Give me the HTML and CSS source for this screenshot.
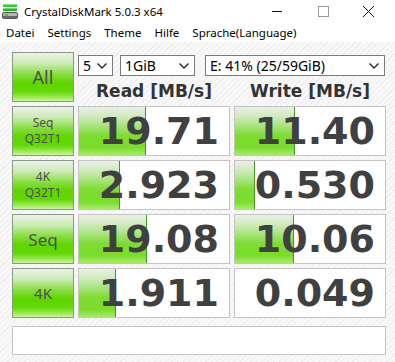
FILE: index.html
```html
<!DOCTYPE html>
<html lang="de">
<head>
    <meta charset="UTF-8">
    <title>CrystalDiskMark 5.0.3 x64</title>
    <link rel="stylesheet" href="styles.css">
</head>
<body>
    <div class="window">
        <div class="titlebar">
            <svg class="app-icon" width="16" height="16" viewBox="0 0 16 16">
                <rect x="1" y="1" width="14" height="3" fill="#3cc43c"/>
                <rect x="1" y="1" width="14" height="1" fill="#7ee07e"/>
                <rect x="1" y="5" width="14" height="3" fill="#2fb02f"/>
                <rect x="1" y="5" width="14" height="1" fill="#6fd86f"/>
                <rect x="0.5" y="9.5" width="15" height="6" rx="1.5" fill="#b8b8b8" stroke="#555"/>
                <rect x="1" y="13" width="14" height="2" fill="#6a6a6a"/>
                <rect x="3" y="11" width="3" height="2" fill="#35d035"/>
            </svg>
            <span class="title">CrystalDiskMark 5.0.3 x64</span>
            <div class="controls">
                <svg width="46" height="22" viewBox="0 0 46 22"><path d="M18 11.5h10" stroke="#111" stroke-width="1"/></svg>
                <svg width="46" height="22" viewBox="0 0 46 22"><rect x="18.5" y="6.5" width="10" height="10" fill="none" stroke="#999"/></svg>
                <svg width="46" height="22" viewBox="0 0 46 22"><path d="M17 6l11 11M28 6l-11 11" stroke="#111" stroke-width="1"/></svg>
            </div>
        </div>
        <div class="menubar">
            <span>Datei</span>
            <span>Settings</span>
            <span>Theme</span>
            <span>Hilfe</span>
            <span>Sprache(Language)</span>
        </div>

        <div class="main">
            <div class="top">
                <div class="btn btn-all">All</div>
                <div class="top-right">
                    <div class="selects">
                        <div class="select sel-count">5
                            <svg class="chev" width="10" height="6" viewBox="0 0 10 6"><path d="M0.5 0.5l4.5 4.5 4.5-4.5" fill="none" stroke="#222" stroke-width="1.3"/></svg>
                        </div>
                        <div class="select sel-size">1GiB
                            <svg class="chev" width="10" height="6" viewBox="0 0 10 6"><path d="M0.5 0.5l4.5 4.5 4.5-4.5" fill="none" stroke="#222" stroke-width="1.3"/></svg>
                        </div>
                        <div class="select sel-drive">E: 41% (25/59GiB)
                            <svg class="chev" width="10" height="6" viewBox="0 0 10 6"><path d="M0.5 0.5l4.5 4.5 4.5-4.5" fill="none" stroke="#222" stroke-width="1.3"/></svg>
                        </div>
                    </div>
                    <div class="headers">
                        <div class="head">Read [MB/s]</div>
                        <div class="head">Write [MB/s]</div>
                    </div>
                </div>
            </div>

            <div class="row">
                <div class="btn btn-small"><span>Seq</span><span>Q32T1</span></div>
                <div class="value"><div class="fill" style="width: 67px"></div><span>19.71</span></div>
                <div class="value"><div class="fill" style="width: 60px"></div><span>11.40</span></div>
            </div>
            <div class="row">
                <div class="btn btn-small"><span>4K</span><span>Q32T1</span></div>
                <div class="value"><div class="fill" style="width: 41px"></div><span>2.923</span></div>
                <div class="value"><div class="fill" style="width: 20px"></div><span>0.530</span></div>
            </div>
            <div class="row">
                <div class="btn btn-seq">Seq</div>
                <div class="value"><div class="fill" style="width: 68px"></div><span>19.08</span></div>
                <div class="value"><div class="fill" style="width: 59px"></div><span>10.06</span></div>
            </div>
            <div class="row">
                <div class="btn btn-4k">4K</div>
                <div class="value"><div class="fill" style="width: 37px"></div><span>1.911</span></div>
                <div class="value"><span>0.049</span></div>
            </div>

            <div class="status"></div>
        </div>
    </div>
</body>
</html>
```

FILE: styles.css
```css
body {
    margin: 0;
    font-family: "Noto Sans", sans-serif;
    background: #fff;
}
.window {
    width: 395px;
    height: 362px;
    overflow: hidden;
}
.titlebar {
    height: 22px;
    display: flex;
    align-items: center;
    background: #fff;
}
.app-icon {
    margin: 0 6px 0 2px;
}
.title {
    font-size: 11.5px;
    color: #000;
}
.controls {
    margin-left: auto;
    display: flex;
    align-self: flex-start;
    margin-right: 3px;
}
.controls svg {
    display: block;
}
.menubar {
    height: 20px;
    display: flex;
    align-items: center;
    gap: 13px;
    padding-left: 6px;
    font-size: 11.5px;
    color: #000;
    background: #fff;
}
.main {
    height: 320px;
    padding: 10px 9px 0 12px;
    display: flex;
    flex-direction: column;
    gap: 4px;
    background: repeating-linear-gradient(135deg, #f8f8f8 0 3px, #eeeeee 3px 4px);
}
.top {
    display: flex;
    gap: 4px;
    height: 50px;
}
.btn {
    width: 62px;
    box-sizing: border-box;
    border: 1px solid #889a86;
    background: linear-gradient(#eef1ec 0%, #c9ebb0 22%, #86dd3e 45%, #5fd600 62%, #62d804 80%, #a4ec62 94%, #cdf5a4 100%);
    color: #4f4f4f;
    display: flex;
    flex-direction: column;
    align-items: center;
    justify-content: center;
    text-align: center;
    flex-shrink: 0;
}
.btn-all {
    height: 50px;
    font-size: 18px;
}
.btn-small {
    font-size: 12px;
    line-height: 16px;
}
.btn-seq {
    font-size: 17px;
}
.btn-4k {
    font-size: 15px;
}
.top-right {
    display: flex;
    flex-direction: column;
}
.selects {
    display: flex;
    margin-top: 3px;
    height: 21px;
}
.select {
    box-sizing: border-box;
    height: 21px;
    border: 1px solid #7a7a7a;
    background: #fff;
    font-size: 14px;
    color: #000;
    display: flex;
    align-items: center;
    padding: 0 5px 0 4px;
}
.chev {
    margin-left: auto;
}
.sel-count {
    width: 35px;
}
.sel-size {
    width: 75px;
    margin-left: 7px;
}
.sel-drive {
    width: 180px;
    margin-left: 10px;
}
.headers {
    display: flex;
    gap: 4px;
    margin-top: 2px;
}
.head {
    width: 152px;
    text-align: center;
    font-family: "DejaVu Sans", sans-serif;
    font-weight: bold;
    font-size: 17px;
    line-height: 26px;
    color: #333;
}
.row {
    display: flex;
    gap: 4px;
    height: 50px;
}
.value {
    position: relative;
    width: 152px;
    box-sizing: border-box;
    border: 1px solid #c4c4c4;
    background: #fff;
    display: flex;
    align-items: center;
    justify-content: flex-end;
    padding-right: 10px;
    overflow: hidden;
}
.fill {
    position: absolute;
    left: 0;
    top: 0;
    bottom: 0;
    box-sizing: border-box;
    border-right: 1px solid #3c9a1c;
    background: linear-gradient(#eaefe6 0%, #cfeabb 20%, #a6e47a 40%, #7ddc30 60%, #7cdc2c 85%, #a8ea6e 100%);
}
.value span {
    position: relative;
    font-family: "DejaVu Sans", sans-serif;
    font-weight: bold;
    font-size: 38px;
    line-height: 48px;
    color: #404040;
}
.status {
    margin-top: 4px;
    width: 374px;
    height: 29px;
    box-sizing: border-box;
    border: 1px solid #c4c4c4;
    background: #fff;
}
```
